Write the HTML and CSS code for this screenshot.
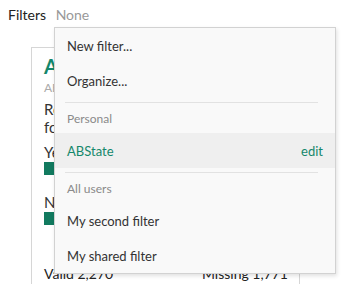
FILE: index.html
```html
<!DOCTYPE html>
<html lang="en">
<head>
    <meta charset="UTF-8">
    <title>Filters</title>
    <link rel="stylesheet" href="styles.css">
</head>
<body>
    <!-- Заголовок фильтров -->
    <div class="filter-bar">
        <span class="filter-label">Filters</span>
        <span class="filter-value">None</span>

        <!-- Выпадающее меню -->
        <div class="dropdown">
            <a href="#" class="dd-item">New filter...</a>
            <a href="#" class="dd-item">Organize...</a>
            <div class="dd-divider"></div>
            <div class="dd-header">Personal</div>
            <a href="#" class="dd-item dd-active">
                <span>ABState</span>
                <span class="dd-edit">edit</span>
            </a>
            <div class="dd-divider"></div>
            <div class="dd-header">All users</div>
            <a href="#" class="dd-item">My second filter</a>
            <a href="#" class="dd-item">My shared filter</a>
        </div>
    </div>

    <!-- Карточка вопроса -->
    <div class="card">
        <div class="card-title">ABState</div>
        <div class="card-sub">ABState</div>
        <div class="card-text">Respondents grouped by home state for the current year</div>
        <div class="answer">
            <div class="answer-label">Yes</div>
            <div class="answer-bar" style="width: 62%;"></div>
        </div>
        <div class="answer">
            <div class="answer-label">No</div>
            <div class="answer-bar" style="width: 38%;"></div>
        </div>
        <div class="card-footer">
            <span>Valid 2,270</span>
            <span>Missing 1,771</span>
        </div>
    </div>
</body>
</html>
```

FILE: styles.css
```css
/* Общие стили */
body {
    font-family: 'Lato', 'Open Sans', sans-serif;
    margin: 0;
    padding: 0;
    background-color: #FFFFFF;
    color: #333;
    font-size: 14px;
}

/* Строка фильтров */
.filter-bar {
    position: relative;
    padding: 3px 8px 0;
    height: 24px;
    line-height: 24px;
    font-size: 14px;
}

.filter-label {
    color: #222;
}

.filter-value {
    color: #999;
    margin-left: 6px;
}

/* Меню */
.dropdown {
    position: absolute;
    top: 27px;
    left: 54px;
    width: 280px;
    background-color: #f9f9f9;
    border: 1px solid #d2d2d2;
    box-shadow: 1px 2px 4px rgba(0, 0, 0, 0.12);
    z-index: 10;
    line-height: normal;
}

.dd-item {
    display: flex;
    justify-content: space-between;
    align-items: center;
    height: 35px;
    padding: 0 12px;
    font-size: 13px;
    color: #333;
    text-decoration: none;
}

.dd-active {
    background-color: #efefef;
    color: #14876b;
}

.dd-edit {
    color: #14876b;
}

.dd-divider {
    height: 1px;
    margin: 4px 17px 0 10px;
    background-color: #e2e2e2;
}

.dd-header {
    display: flex;
    align-items: center;
    height: 30px;
    padding: 0 12px;
    font-size: 12px;
    color: #8a8a8a;
}

/* Карточка */
.card {
    margin: 20px 0 0 31px;
    width: 244px;
    height: 260px;
    padding: 6px 11px 0 12px;
    border: 1px solid #d6d6d6;
}

.card-title {
    font-size: 20px;
    font-weight: 700;
    color: #14876b;
    line-height: 24px;
}

.card-sub {
    font-size: 12px;
    color: #aaa;
    margin-top: 2px;
}

.card-text {
    margin-top: 5px;
    font-size: 15px;
    line-height: 18px;
    color: #333;
}

.answer {
    margin-top: 6px;
}

.answer-label {
    font-size: 15px;
    line-height: 20px;
}

.answer-bar {
    height: 13px;
    background-color: #127a5f;
}

.answer + .answer {
    margin-top: 17px;
}

.card-footer {
    display: flex;
    justify-content: space-between;
    margin-top: 40px;
    font-size: 14px;
    color: #222;
}
```
